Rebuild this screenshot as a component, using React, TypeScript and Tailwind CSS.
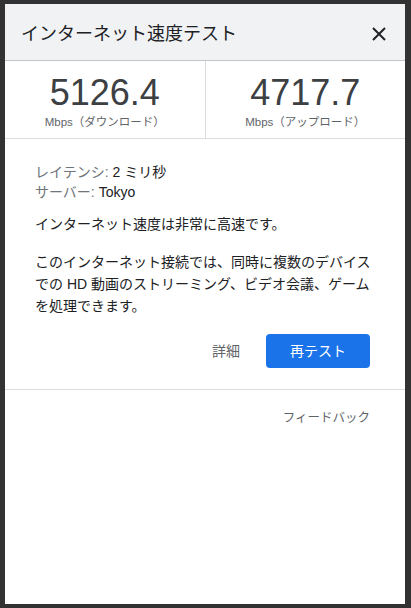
const font = "font-['Liberation_Sans','Noto_Sans_CJK_JP',sans-serif]";

function Stat({ value, label }: { value: string; label: string }) {
  return (
    <div className="flex-1 flex flex-col items-center pt-[14px]">
      <div className="text-[36px] leading-[36px] text-[#3c4043]">{value}</div>
      <div className="text-[11.5px] leading-[14px] mt-[4px] text-[#5f6368]">{label}</div>
    </div>
  );
}

export default function App() {
  return (
    <div className={`w-[411px] h-[608px] bg-[#323232] pt-[4px] pl-[5px] ${font}`}>
      <div className="w-[400px] h-[600px] bg-white flex flex-col">
        {/* Header */}
        <div className="h-[57px] flex-shrink-0 bg-[#f1f2f4] border-b border-[#c4c5c9] flex items-center justify-between pl-[16px] pr-[19px] pt-[4px]">
          <h1 className="text-[18px] text-[#202124]">インターネット速度テスト</h1>
          <svg width="14" height="14" viewBox="0 0 14 14" className="text-[#202124]">
            <path d="M1 1 L13 13 M13 1 L1 13" stroke="currentColor" strokeWidth="2" fill="none" />
          </svg>
        </div>

        {/* Stats */}
        <div className="h-[78px] flex-shrink-0 flex border-b border-[#dadce0]">
          <Stat value="5126.4" label="Mbps（ダウンロード）" />
          <div className="w-px bg-[#dadce0]" />
          <Stat value="4717.7" label="Mbps（アップロード）" />
        </div>

        {/* Body */}
        <div className="pl-[30px] pr-[30px] pt-[23px] text-[14px]">
          <div className="leading-[20px]">
            <div>
              <span className="text-[#70757a]">レイテンシ: </span>
              <span className="text-[#202124]">2 ミリ秒</span>
            </div>
            <div>
              <span className="text-[#70757a]">サーバー: </span>
              <span className="text-[#202124]">Tokyo</span>
            </div>
          </div>
          <p className="mt-[11px] leading-[22px] text-[#202124]">インターネット速度は非常に高速です。</p>
          <p className="mt-[16px] leading-[22px] text-[#202124]">
            このインターネット接続では、同時に複数のデバイス
            <br />
            での HD 動画のストリーミング、ビデオ会議、ゲーム
            <br />
            を処理できます。
          </p>
          <div className="flex items-center justify-end gap-[26px] mt-[17px] pr-[5px]">
            <button className="text-[14px] text-[#5f6368]">詳細</button>
            <button className="w-[104px] h-[34px] rounded-[4px] bg-[#1a73e8] text-white text-[14px]">
              再テスト
            </button>
          </div>
        </div>

        <div className="mt-[21px] border-t border-[#dadce0]" />
        <div className="flex justify-end pr-[35px] pt-[20px]">
          <span className="text-[12.5px] leading-[16px] text-[#5f6368]">フィードバック</span>
        </div>
      </div>
    </div>
  );
}
